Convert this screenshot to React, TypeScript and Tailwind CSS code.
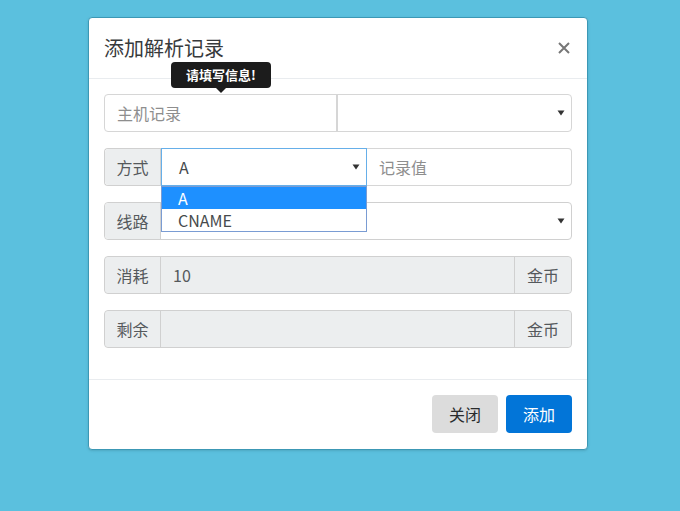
const font = "font-['Microsoft_YaHei','Noto_Sans_CJK_SC',sans-serif]";

function Caret() {
  return (
    <svg width="8" height="6" viewBox="0 0 8 6" className="shrink-0">
      <path d="M0.5 0.5h7L4 5.5z" fill="#333" />
    </svg>
  );
}

function Addon({ children, side = "left" }: { children: React.ReactNode; side?: "left" | "right" }) {
  return (
    <div
      className={`flex h-full items-center justify-center bg-[#eceeef] text-base text-[#55595c] border-[#d0d0d0] ${
        side === "left" ? "w-[56px] rounded-l border-r" : "w-[57px] rounded-r border-l"
      }`}
    >
      {children}
    </div>
  );
}

export default function App() {
  return (
    <div className={`min-h-[511px] w-[680px] bg-[#5bc0de] pl-[88px] pt-[17px] ${font}`}>
      <div className="w-[500px] rounded border border-[#3c98b5] bg-white shadow-sm">
        {/* Header */}
        <div className="flex h-[61px] items-center justify-between border-b border-[#e9ecef] px-[15px]">
          <h4 className="text-[20px] text-[#373a3c]">添加解析记录</h4>
          <svg width="12" height="12" viewBox="0 0 12 12" className="mr-[2px]">
            <path d="M1 1l10 10M11 1L1 11" stroke="#777" strokeWidth="2" />
          </svg>
        </div>

        {/* Body */}
        <div className="relative flex flex-col gap-4 px-[15px] pb-[31px] pt-[15px]">
          {/* Tooltip */}
          <div className="absolute left-[82px] top-[-17px] z-20 flex flex-col items-center">
            <div className="flex h-[26px] w-[100px] items-center justify-center rounded bg-[#1c1c1c] text-[13px] font-bold text-white">
              请填写信息!
            </div>
            <div className="h-0 w-0 border-x-[5px] border-t-[5px] border-x-transparent border-t-[#1c1c1c]" />
          </div>

          {/* Row 1 */}
          <div className="flex h-[38px] rounded border border-[#d6d6d6]">
            <div className="flex w-[233px] items-center border-r-2 border-[#d6d6d6] px-3 text-base text-[#8e8e8e]">
              主机记录
            </div>
            <div className="flex flex-1 items-center justify-end pr-[6px]">
              <Caret />
            </div>
          </div>

          {/* Row 2 */}
          <div className="relative flex h-[38px]">
            <div className="h-full rounded-l border border-r-0 border-[#d0d0d0]">
              <Addon>方式</Addon>
            </div>
            <div className="flex w-[206px] items-center justify-between border border-[#66afe9] pl-[17px] pr-[6px] text-base text-[#464a4c]">
              <span>A</span>
              <Caret />
            </div>
            <div className="flex flex-1 items-center rounded-r border border-l-0 border-[#d6d6d6] px-3 text-base text-[#8e8e8e]">
              记录值
            </div>
            {/* Dropdown list */}
            <div className="absolute left-[57px] top-[38px] z-10 w-[206px] border border-[#7a9cd3] bg-white text-base leading-[22px] text-[#464a4c]">
              <div className="bg-[#1e90ff] pl-[16px] text-white">A</div>
              <div className="pl-[16px]">CNAME</div>
            </div>
          </div>

          {/* Row 3 */}
          <div className="flex h-[38px] rounded border border-[#d0d0d0]">
            <Addon>线路</Addon>
            <div className="flex flex-1 items-center justify-end pr-[6px]">
              <Caret />
            </div>
          </div>

          {/* Row 4 */}
          <div className="flex h-[38px] rounded border border-[#d0d0d0] bg-[#eceeef]">
            <Addon>消耗</Addon>
            <div className="flex flex-1 items-center px-3 text-base text-[#55595c]">10</div>
            <Addon side="right">金币</Addon>
          </div>

          {/* Row 5 */}
          <div className="flex h-[38px] rounded border border-[#d0d0d0] bg-[#eceeef]">
            <Addon>剩余</Addon>
            <div className="flex-1" />
            <Addon side="right">金币</Addon>
          </div>
        </div>

        {/* Footer */}
        <div className="flex justify-end gap-2 border-t border-[#e9ecef] px-[15px] pb-[16px] pt-[15px]">
          <button className="h-[38px] w-[66px] rounded bg-[#dcdcdc] text-base text-[#292b2c]">关闭</button>
          <button className="h-[38px] w-[66px] rounded bg-[#0275d8] text-base text-white">添加</button>
        </div>
      </div>
    </div>
  );
}
